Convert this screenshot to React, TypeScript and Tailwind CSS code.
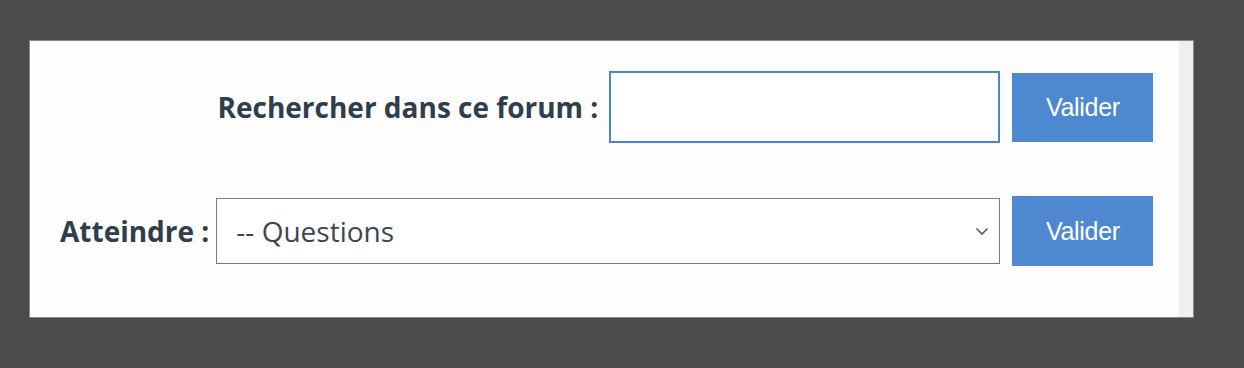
export default function App() {
  return (
    <div className="w-[1244px] h-[368px] bg-[#4b4b4b] pt-[40px] pl-[29px]">
      <div className="w-[1165px] h-[278px] border border-[#8a8a8a] bg-[#fdfdfd] flex">
        <div className="flex-1 flex flex-col pt-[30px] pr-[26px]" style={{ fontFamily: '"Open Sans", sans-serif' }}>
          <div className="flex items-center justify-end h-[72px]">
            <span className="text-[28px] font-bold text-[#2f3d4c] mr-[11px] leading-none whitespace-nowrap">Rechercher dans ce forum :</span>
            <input type="text" className="shrink-0 w-[391px] h-[72px] border-2 border-[#4a86d0] bg-white outline-none" />
            <button className="shrink-0 ml-[12px] w-[141px] h-[69px] bg-[#4d88d1] text-white text-[25px] tracking-[-0.3px] leading-none" style={{ fontFamily: '"Liberation Sans", sans-serif' }}>Valider</button>
          </div>
          <div className="flex items-center h-[70px] mt-[53px] pl-[30px]">
            <span className="shrink-0 text-[28px] font-bold text-[#2f3d4c] mr-[7px] leading-none whitespace-nowrap">Atteindre :</span>
            <div className="shrink-0 relative w-[784px] h-[66px] border border-[#7a7a7a] bg-white flex items-center pl-[19px]">
              <span className="text-[28px] text-[#3d4650] leading-none whitespace-nowrap">-- Questions</span>
              <svg className="absolute right-[10px] top-[28px]" width="14" height="9" viewBox="0 0 14 9">
                <path d="M1.5 1.5 L7 7 L12.5 1.5" fill="none" stroke="#5a5a5a" strokeWidth="1.6" />
              </svg>
            </div>
            <button className="shrink-0 ml-[12px] w-[141px] h-[70px] bg-[#4d88d1] text-white text-[25px] tracking-[-0.3px] leading-none" style={{ fontFamily: '"Liberation Sans", sans-serif' }}>Valider</button>
          </div>
        </div>
        <div className="w-[14px] bg-[#efefef]" />
      </div>
    </div>
  );
}
